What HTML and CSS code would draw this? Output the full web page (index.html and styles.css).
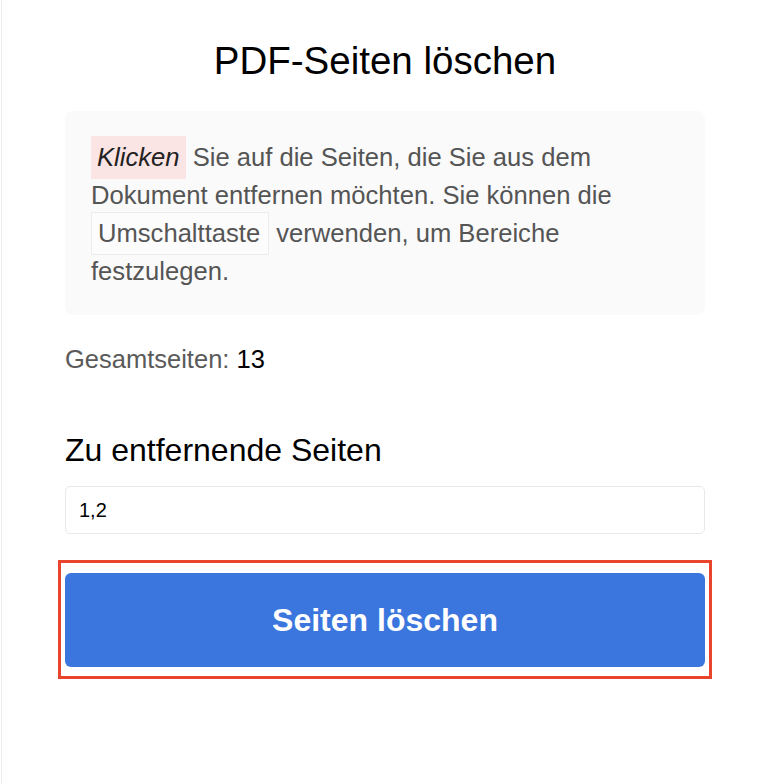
FILE: index.html
```html
<!DOCTYPE html>
<html lang="de">
<head>
<meta charset="utf-8">
<title>PDF-Seiten löschen</title>
<link rel="stylesheet" href="styles.css">
</head>
<body>
<div class="page">
  <main class="panel">
    <h1 class="title">PDF-Seiten löschen</h1>
    <div class="info">
      <p class="info-text"><em class="hl">Klicken</em> Sie auf die Seiten, die Sie aus dem Dokument entfernen möchten. Sie können die <kbd class="key">Umschalttaste</kbd> verwenden, um Bereiche festzulegen.</p>
    </div>
    <p class="total">Gesamtseiten: <span class="total-num">13</span></p>
    <h2 class="label">Zu entfernende Seiten</h2>
    <input class="pages-input" type="text" value="1,2">
    <div class="highlight-frame">
      <button class="delete-btn" type="button">Seiten löschen</button>
    </div>
  </main>
</div>
</body>
</html>
```

FILE: styles.css
```css
html, body {
  margin: 0;
  padding: 0;
  background: #ffffff;
}

body {
  font-family: "Liberation Sans", Arial, Helvetica, sans-serif;
  color: #000;
}

.page {
  min-height: 784px;
  border-left: 1px solid #ececec;
  margin-left: 1px;
  padding-left: 63px;
  box-sizing: border-box;
}

.panel {
  width: 640px;
  display: flex;
  flex-direction: column;
  padding-top: 38px;
}

.title {
  margin: 0;
  font-size: 38.5px;
  line-height: 46px;
  font-weight: normal;
  text-align: center;
  color: #000;
}

.info {
  margin-top: 27px;
  background: #fafafa;
  border-radius: 8px;
  padding: 27px 26px 25px 26px;
}

.info-text {
  margin: 0;
  font-size: 25.6px;
  line-height: 38px;
  color: #555555;
}

.hl {
  display: inline-block;
  font-style: italic;
  color: #222222;
  background: #fbe4e4;
  line-height: 29px;
  padding: 7px 6px;
  margin: -3px 0;
}

.key {
  display: inline-block;
  font-family: "Liberation Sans", Arial, Helvetica, sans-serif;
  font-size: 25.6px;
  line-height: 29px;
  color: #555555;
  background: #fcfcfc;
  border: 1px solid #ececec;
  padding: 6px 8px 6px 6px;
  margin: -3px 0;
}

.total {
  margin: 29px 0 0 0;
  font-size: 25.5px;
  line-height: 30px;
  color: #5a5a5a;
}

.total-num {
  color: #000;
}

.label {
  margin: 56px 0 0 0;
  font-size: 32px;
  line-height: 40px;
  font-weight: normal;
  color: #000;
}

.pages-input {
  margin-top: 16px;
  height: 48px;
  box-sizing: border-box;
  border: 1px solid #e8e8e8;
  border-radius: 5px;
  padding: 0 13px;
  font-family: "Liberation Sans", Arial, Helvetica, sans-serif;
  font-size: 20px;
  color: #000;
  background: #fff;
  outline: none;
}

.highlight-frame {
  margin: 26px -7px 0 -7px;
  border: 3px solid #e8452c;
  padding: 10px 4px 9px 4px;
}

.delete-btn {
  display: block;
  width: 100%;
  height: 94px;
  border: none;
  border-radius: 6px;
  background: #3b76de;
  color: #ffffff;
  font-family: "Liberation Sans", Arial, Helvetica, sans-serif;
  font-size: 32px;
  font-weight: bold;
  cursor: pointer;
}
```
